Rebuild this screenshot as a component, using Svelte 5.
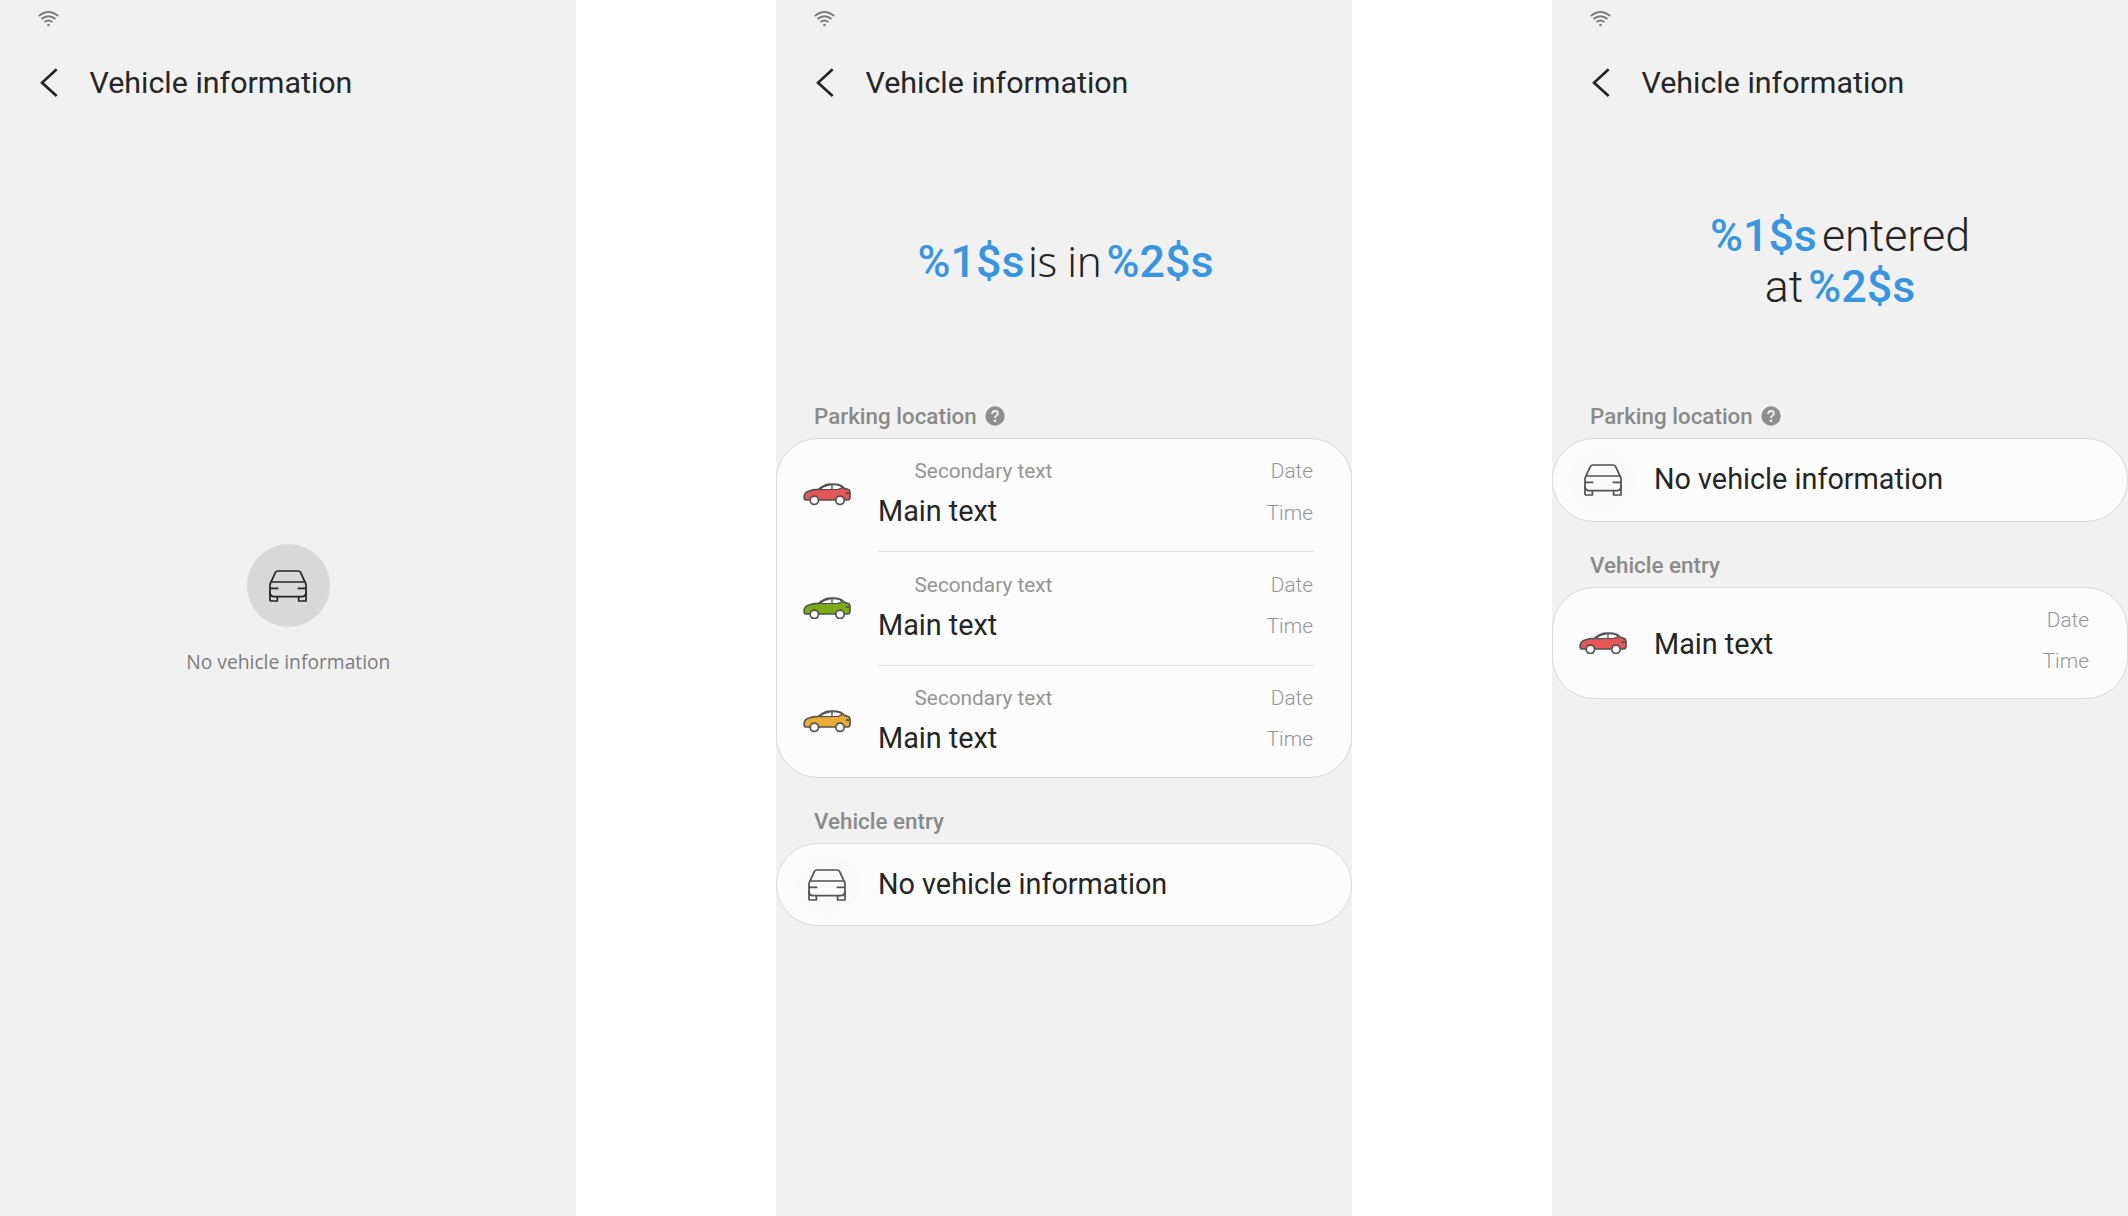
<script>
  const rows = [
    { id: 1, color: '#e65558' },
    { id: 2, color: '#7aad17' },
    { id: 3, color: '#eaac35' }
  ];
</script>

{#snippet topBar()}
  <div class="status">
    <svg class="wifi" viewBox="0 0 62 46">
      <g fill="none" stroke="#7b7b7b" stroke-width="5.500">
        <path d="M2 15Q31 -9 60 15" />
        <path d="M10 24Q31 7 52 24" />
        <path d="M19 33Q31 23 43 33" />
      </g>
      <circle cx="31" cy="41.500" r="4" fill="#7b7b7b" />
    </svg>
  </div>
  <header>
    <svg class="back" viewBox="0 0 54 88">
      <path d="M50 4L6 44L50 84" fill="none" stroke="#252525" stroke-width="8" />
    </svg>
    <h1>Vehicle information</h1>
  </header>
{/snippet}

{#snippet frontCar()}
  <svg class="front-car" viewBox="0 0 114 96">
    <g fill="none" stroke="currentColor" stroke-width="5.200" stroke-linejoin="round">
      <path d="M3 93V46Q3 41 5.500 37L19 8Q21.500 3 27 3H87Q92.500 3 95 8L108.500 37Q111 41 111 46V93H89V80" />
      <path d="M3 93H25V80" />
      <path d="M7 36H107M3 55H28M86 55H111" />
      <path d="M3 66Q3 80 16 80H98Q111 80 111 66" />
    </g>
  </svg>
{/snippet}

{#snippet sideCar(color)}
  <svg class="side-car" viewBox="0 0 144 68">
    <g stroke="#525252" stroke-width="5" stroke-linejoin="round">
      <path
        d="M8 51Q3 50 3.500 41Q3 29 18 24Q29 20 46 19Q62 6 75 4Q98 1 112 7Q118 10 124 16L138 20Q142 25 141 33V44Q140 51 134 51Z"
        fill={color}
      />
      <path d="M49 20Q62 8 77 6Q98 3 112 9Q118 13 114 16L105 19Z" fill="#fcfcfc" stroke-width="4" />
      <path d="M87 5V19" stroke-width="4" />
      <path d="M128 30H141" />
      <circle cx="34" cy="52" r="12.500" fill="#fcfcfc" />
      <circle cx="111" cy="52" r="12.500" fill="#fcfcfc" />
    </g>
  </svg>
{/snippet}

{#snippet help()}
  <svg class="help" viewBox="0 0 20 20">
    <circle cx="10" cy="10" r="9.700" fill="#8e8e8e" />
    <path d="M7.200 8Q7.200 5 10 5Q12.900 5 12.900 7.500Q12.900 8.800 11.300 9.700Q10 10.500 10 12" fill="none" stroke="#f1f1f1" stroke-width="1.800" />
    <circle cx="10" cy="14.800" r="1.200" fill="#f1f1f1" />
  </svg>
{/snippet}

{#snippet emptyCard()}
  <div class="card empty-card">
    <div class="icon"><span class="halo">{@render frontCar()}</span></div>
    <span class="main">No vehicle information</span>
  </div>
{/snippet}

{#snippet stamp()}
  <div class="stamp"><span>Date</span><span>Time</span></div>
{/snippet}

<main>
  <section class="screen">
    {@render topBar()}
    <div class="blank">
      <div class="disc">{@render frontCar()}</div>
      <p>No vehicle information</p>
    </div>
  </section>

  <section class="screen">
    {@render topBar()}
    <div class="hero">
      <p class="one-line"><b>%1$s</b><span class="alt">is in</span><b>%2$s</b></p>
    </div>
    <h2>Parking location {@render help()}</h2>
    <div class="card">
      {#each rows as row (row.id)}
        <div class="row">
          <div class="icon">{@render sideCar(row.color)}</div>
          <div class="body">
            <div class="texts">
              <span class="secondary">Secondary text</span>
              <span class="main">Main text</span>
            </div>
            {@render stamp()}
          </div>
        </div>
      {/each}
    </div>
    <h2 class="next">Vehicle entry</h2>
    {@render emptyCard()}
  </section>

  <section class="screen">
    {@render topBar()}
    <div class="hero">
      <p><b>%1$s</b><span>entered</span></p>
      <p><span>at</span><b>%2$s</b></p>
    </div>
    <h2>Parking location {@render help()}</h2>
    {@render emptyCard()}
    <h2 class="next">Vehicle entry</h2>
    <div class="card">
      <div class="row single">
        <div class="icon">{@render sideCar(rows[0].color)}</div>
        <div class="body">
          <span class="main">Main text</span>
          {@render stamp()}
        </div>
      </div>
    </div>
  </section>
</main>

<style>
  :global(body) {
    background: #fff;
  }
  main {
    display: flex;
    justify-content: space-between;
    width: 2128px;
    height: 1216px;
    overflow: hidden;
    font-family: Roboto, sans-serif;
    color: #252525;
  }
  .screen {
    display: flex;
    flex-direction: column;
    width: 576px;
    background: #f1f1f1;
  }
  h1,
  h2,
  p {
    margin: 0;
    font-weight: 400;
  }
  svg {
    display: block;
    flex: none;
  }
  .status {
    box-sizing: border-box;
    height: 39px;
    padding: 11px 0 0 38px;
  }
  .wifi {
    width: 21px;
    height: 15.500px;
  }
  header {
    display: flex;
    align-items: center;
    height: 88px;
    padding-left: 39.500px;
  }
  .back {
    width: 18px;
    height: 29.300px;
  }
  h1 {
    margin-left: 32px;
    font-size: 30.400px;
    line-height: 40px;
    white-space: nowrap;
  }
  .blank {
    display: flex;
    flex-direction: column;
    align-items: center;
    padding-top: 417px;
  }
  .disc {
    display: flex;
    align-items: center;
    justify-content: center;
    width: 83px;
    height: 83px;
    border-radius: 50%;
    background: #d8d8d8;
  }
  .front-car {
    width: 38px;
    height: 32px;
  }
  .blank p {
    margin-top: 18px;
    font-family: 'Open Sans', 'Noto Sans', sans-serif;
    font-size: 20.800px;
    line-height: 32px;
    color: #7c7c7c;
    white-space: nowrap;
    transform: scaleX(0.925);
  }
  .hero {
    box-sizing: border-box;
    display: flex;
    flex-direction: column;
    align-items: center;
    justify-content: center;
    height: 270px;
    padding-bottom: 2px;
    font-size: 44.800px;
    line-height: 51px;
  }
  .hero p {
    display: flex;
    gap: 5px;
    white-space: nowrap;
  }
  .hero .one-line {
    padding: 1px 0 0 3px;
  }
  .hero b {
    font-weight: 500;
    color: #3896e0;
  }
  .hero span {
    font-weight: 300;
  }
  .hero .alt {
    margin: -1px 0 0 -1.500px;
    font-family: 'Noto Sans', sans-serif;
    font-size: 42px;
    letter-spacing: -0.350px;
  }
  h2 {
    display: flex;
    align-items: center;
    gap: 8px;
    height: 38px;
    margin-bottom: 3px;
    padding-left: 38px;
    font-size: 22.400px;
    font-weight: 500;
    color: #8a8a8a;
    white-space: nowrap;
  }
  h2.next {
    height: 39px;
    margin-top: 24px;
    margin-bottom: 2px;
  }
  .help {
    width: 20px;
    height: 20px;
  }
  .card {
    box-sizing: border-box;
    border: 1px solid #d9d9d9;
    border-radius: 42px;
    background: #fcfcfc;
  }
  .empty-card {
    display: flex;
    align-items: center;
    height: 83.500px;
  }
  .empty-card .main {
    padding-bottom: 1.500px;
  }
  .icon {
    box-sizing: border-box;
    display: flex;
    flex: none;
    align-items: center;
    justify-content: center;
    width: 101px;
    padding-right: 1px;
    color: #525252;
  }
  .halo {
    display: flex;
    align-items: center;
    justify-content: center;
    width: 64px;
    height: 64px;
    border-radius: 50%;
    background: #fafafa;
  }
  .side-car {
    width: 48px;
    height: 22.700px;
  }
  .row {
    display: flex;
    height: 113.300px;
    margin-right: 37px;
  }
  .row:not(:last-child) .icon {
    padding-bottom: 2px;
  }
  .row:last-child {
    height: 111.400px;
  }
  .row:last-child .icon {
    padding-top: 1px;
  }
  .row.single {
    height: 110px;
  }
  .body {
    display: flex;
    flex: 1;
    justify-content: space-between;
    border-bottom: 1px solid #e1e1e1;
  }
  .row:last-child .body {
    border-bottom: 0;
  }
  .single .body > .main {
    align-self: center;
    padding-top: 3px;
  }
  .texts {
    display: flex;
    flex-direction: column;
    padding-top: 12.300px;
  }
  .main {
    font-size: 28.800px;
    line-height: 40px;
    white-space: nowrap;
  }
  .secondary {
    padding-left: 36.500px;
    font-size: 20.800px;
    line-height: 40px;
    color: #959595;
    white-space: nowrap;
  }
  .stamp {
    display: flex;
    flex-direction: column;
    padding: 12.300px 1px 0 0;
    font-size: 20.800px;
    font-weight: 300;
    line-height: 41.500px;
    color: #959595;
    text-align: right;
  }
</style>
